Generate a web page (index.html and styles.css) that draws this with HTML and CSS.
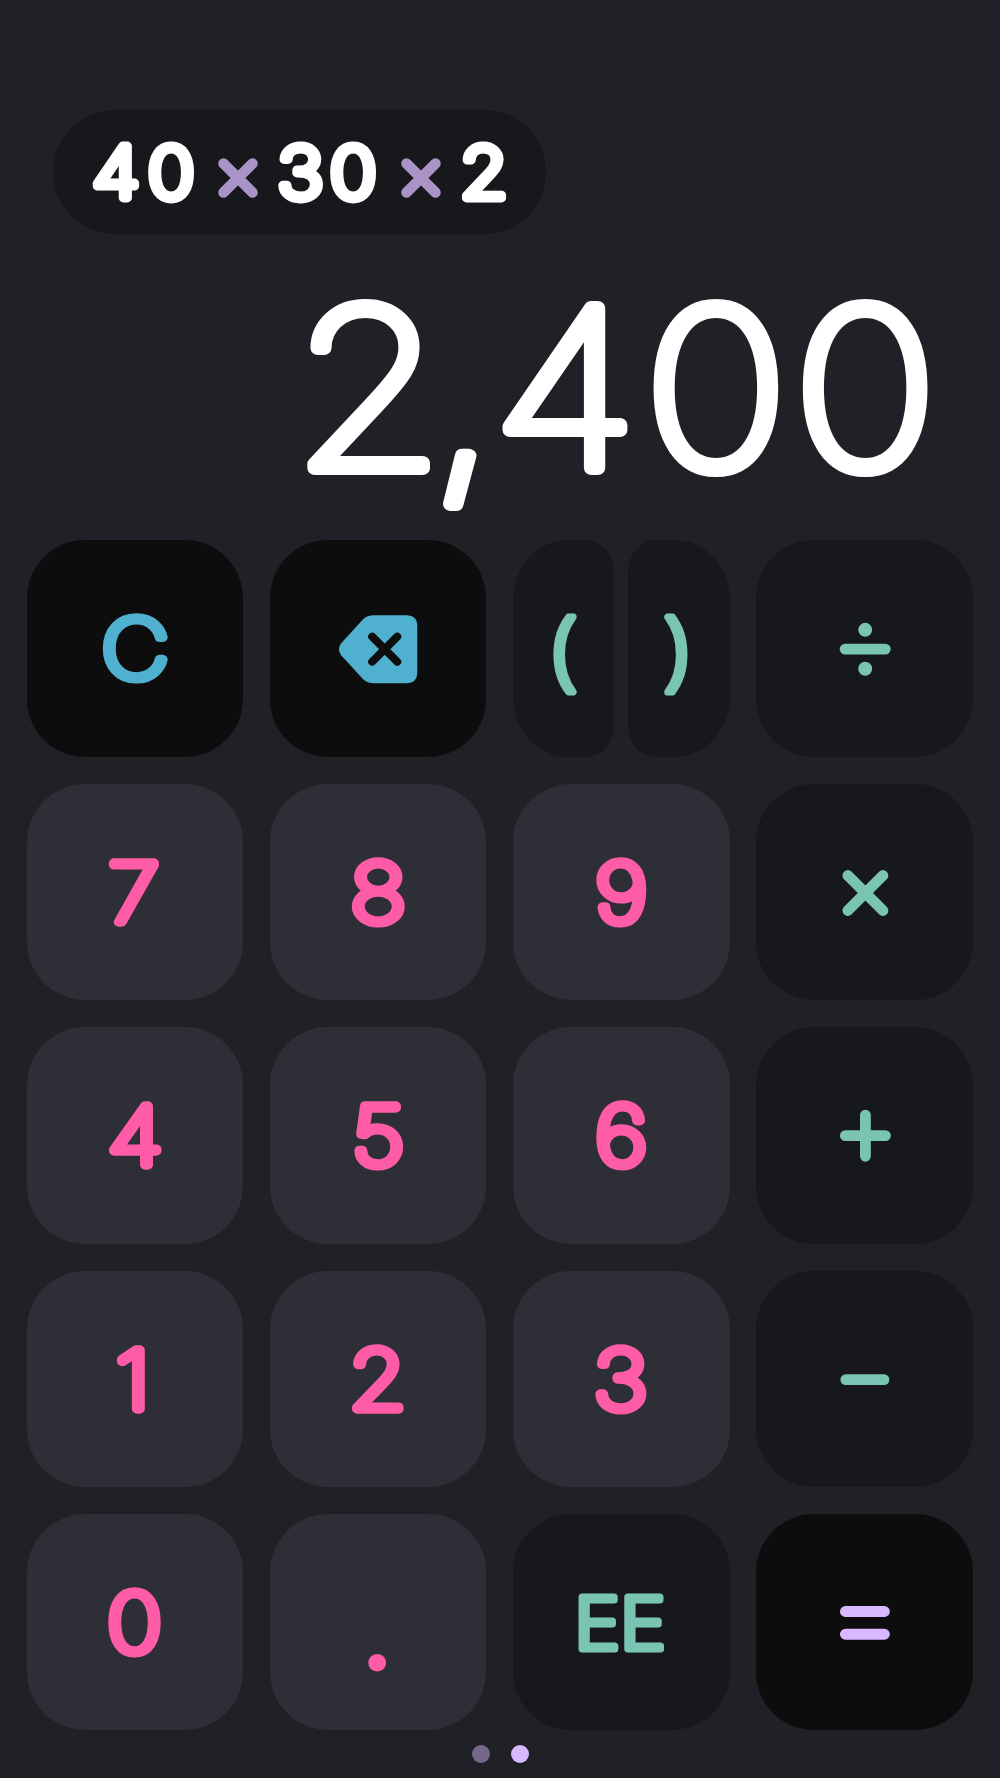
FILE: index.html
```html
<!DOCTYPE html>
<html lang="en">
<head>
    <meta charset="UTF-8">
    <meta name="viewport" content="width=device-width, initial-scale=1.0">
    <title>Calculator</title>
    <link rel="stylesheet" href="styles.css">
</head>
<body>
    <div class="display">
        <div class="expression">
            <svg viewBox="0 0 493 124">
                <text y="88" x="36 87">40</text>
                <path class="times" d="M170.500 53.500l29 29M199.500 53.500l-29 29"/>
                <text y="88" x="206 254">30</text>
                <path class="times" d="M353.500 53.500l29 29M382.500 53.500l-29 29"/>
                <text y="88" x="373.500">2</text>
            </svg>
        </div>
        <svg class="result" viewBox="0 0 1000 306">
            <text y="234 238 234 234 234" x="263.500 388 443.500 580 714.500">2,400</text>
        </svg>
    </div>

    <div class="keypad">
        <button class="key black blue"><svg viewBox="0 0 216 216"><text x="108" y="138">C</text></svg></button>
        <button class="key black blue" aria-label="Delete">
            <svg viewBox="0 0 216 216">
                <path class="solid" d="M104 75H136Q147 75 147 86V132Q147 143 136 143H104Q97 143 93 139L71 115Q66.500 109 71 103L93 79Q97 75 104 75Z"/>
                <path class="cross" d="M102 96.500l25 25M127 96.500l-25 25"/>
            </svg>
        </button>
        <div class="parens">
            <button class="key dark green left"><svg viewBox="0 0 101 216"><text class="paren" x="50" y="134.500">(</text></svg></button>
            <button class="key dark green right"><svg viewBox="0 0 101 216"><text class="paren" x="49.500" y="134.500">)</text></svg></button>
        </div>
        <button class="key dark green" aria-label="Divide">
            <svg viewBox="0 0 216 216">
                <path class="line" d="M89 109h40"/>
                <circle class="solid" cx="109" cy="89.700" r="7"/>
                <circle class="solid" cx="109" cy="128.500" r="7"/>
            </svg>
        </button>

        <button class="key"><svg viewBox="0 0 216 216"><text x="107" y="138">7</text></svg></button>
        <button class="key"><svg viewBox="0 0 216 216"><text x="108" y="138">8</text></svg></button>
        <button class="key"><svg viewBox="0 0 216 216"><text x="108" y="138">9</text></svg></button>
        <button class="key dark green" aria-label="Multiply">
            <svg viewBox="0 0 216 216"><path class="line" d="M91.700 91.300l35 35M126.700 91.300l-35 35"/></svg>
        </button>

        <button class="key"><svg viewBox="0 0 216 216"><text x="108" y="138">4</text></svg></button>
        <button class="key"><svg viewBox="0 0 216 216"><text x="108" y="138">5</text></svg></button>
        <button class="key"><svg viewBox="0 0 216 216"><text x="108" y="138">6</text></svg></button>
        <button class="key dark green" aria-label="Add">
            <svg viewBox="0 0 216 216"><path class="line" d="M89.200 108.500h40M109.200 88v41"/></svg>
        </button>

        <button class="key"><svg viewBox="0 0 216 216"><text x="106" y="138">1</text></svg></button>
        <button class="key"><svg viewBox="0 0 216 216"><text x="107.500" y="138">2</text></svg></button>
        <button class="key"><svg viewBox="0 0 216 216"><text x="107.500" y="138">3</text></svg></button>
        <button class="key dark green" aria-label="Subtract">
            <svg viewBox="0 0 216 216"><path class="line" d="M89.700 108.500h38"/></svg>
        </button>

        <button class="key"><svg viewBox="0 0 216 216"><text x="107.500" y="138">0</text></svg></button>
        <button class="key"><svg viewBox="0 0 216 216"><text class="point" x="107" y="155">.</text></svg></button>
        <button class="key dark green"><svg viewBox="0 0 216 216"><text class="ee" x="107" y="134.500">EE</text></svg></button>
        <button class="key black purple" aria-label="Equals">
            <svg viewBox="0 0 216 216"><path class="line" d="M89.200 97.300h39M89.200 120h39"/></svg>
        </button>
    </div>

    <div class="pages">
        <span class="dot"></span>
        <span class="dot active"></span>
    </div>
</body>
</html>
```
FILE: styles.css
```css
* {
    box-sizing: border-box;
}

body {
    margin: 0;
    width: 1000px;
    height: 1778px;
    overflow: hidden;
    background-color: #202126;
    font-family: Inter, "Liberation Sans", sans-serif;
}

svg {
    display: block;
    width: 100%;
    height: 100%;
    overflow: visible;
}

/* the round stroke softens the corners of the letters */
text {
    fill: currentColor;
    stroke: currentColor;
    stroke-width: 9.5px;
    stroke-linejoin: round;
    font-size: 81.5px;
    font-weight: 100;
    text-anchor: middle;
    transform: scaleX(1.14);
    transform-origin: 108px 0;
}

.display {
    height: 540.4px;
    padding-top: 110px;
    color: #fff;
}

.expression {
    width: 493px;
    height: 124px;
    margin-left: 53px;
    border-radius: 62px;
    background-color: #17181b;
}

.expression text {
    font-size: 71px;
    font-weight: 200;
    stroke-width: 8.8px;
    text-anchor: start;
    transform: scaleX(1.09);
    transform-origin: 0 0;
}

.times {
    fill: none;
    stroke: #a993c7;
    stroke-width: 10.5px;
    stroke-linecap: round;
}

.result {
    height: 306px;
}

.result text {
    font-size: 220px;
    font-weight: 100;
    stroke-width: 14px;
    text-anchor: start;
    transform: scaleX(1.11);
    transform-origin: 0 0;
}

.keypad {
    display: grid;
    grid-template-columns: repeat(4, 216.4px);
    grid-auto-rows: 216.4px;
    gap: 27px 26.7px;
    margin-left: 27px;
}

.key {
    width: 100%;
    height: 100%;
    padding: 0;
    border: none;
    border-radius: 58px;
    background-color: #2e2e36;
    color: #ff5ca8;
    font-family: inherit;
}

.dark {
    background-color: #17181b;
}

.black {
    background-color: #0d0d0e;
}

.green {
    color: #7ac4b3;
}

.blue {
    color: #50b0d0;
}

.purple {
    color: #d8b9ff;
}

.parens {
    display: grid;
    grid-template-columns: 1fr 1fr;
    gap: 14px;
}

.left {
    border-radius: 56px 28px 28px 56px / 60px 32px 32px 60px;
}

.right {
    border-radius: 28px 56px 56px 28px / 32px 60px 60px 32px;
}

.paren {
    font-family: "Liberation Sans", sans-serif;
    font-size: 80px;
    font-weight: 400;
    stroke-width: 7px;
    transform: scaleX(0.82);
    transform-origin: 50px 0;
}

.ee {
    font-size: 71px;
    font-weight: 200;
    stroke-width: 7px;
    transform: scaleX(1.09);
}

.point {
    font-family: Lato, sans-serif;
    font-size: 90px;
    font-weight: 700;
    stroke-width: 4px;
    transform: none;
}

.solid {
    fill: currentColor;
}

.line {
    fill: none;
    stroke: currentColor;
    stroke-width: 10.8px;
    stroke-linecap: round;
}

.cross {
    fill: none;
    stroke: #0d0d0e;
    stroke-width: 8px;
    stroke-linecap: round;
}

.pages {
    display: flex;
    justify-content: center;
    gap: 21.5px;
    margin-top: 15px;
    padding-left: 1px;
}

.dot {
    width: 18px;
    height: 18px;
    border-radius: 50%;
    background-color: #76688c;
}

.dot.active {
    background-color: #d8b9ff;
}
```
